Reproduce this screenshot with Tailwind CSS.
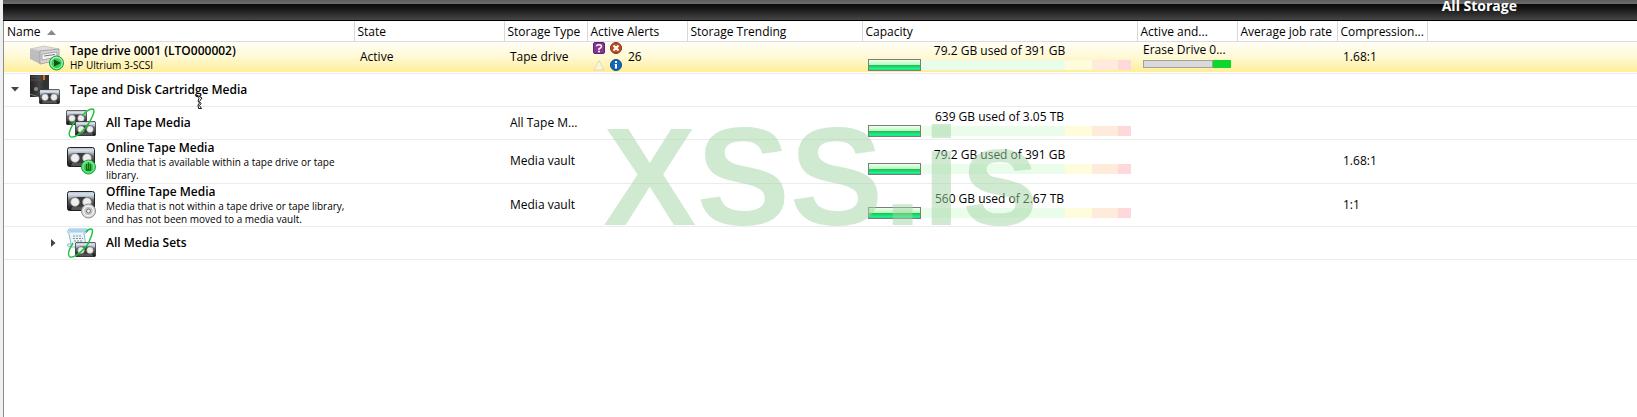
<!DOCTYPE html>
<html lang="en">
<head>
<meta charset="utf-8">
<title>All Storage</title>
<script src="https://cdn.jsdelivr.net/npm/@tailwindcss/browser@4"></script>
</head>
<body class="relative min-h-screen overflow-x-hidden border-l-[3px] border-[#f0f0f0] bg-white font-['Open_Sans','Noto_Sans',sans-serif] text-xs leading-4 text-black">
<svg class="absolute size-0" aria-hidden="true">
  <defs>
    <linearGradient id="shell" x1="0" y1="0" x2="0" y2="1"><stop offset="0" stop-color="#b9bec4"/><stop offset=".15" stop-color="#d5e1ee"/><stop offset=".3" stop-color="#aeb4ba"/><stop offset=".45" stop-color="#63666a"/><stop offset=".75" stop-color="#3a3a3c"/><stop offset="1" stop-color="#111"/></linearGradient>
    <linearGradient id="tower" x1="0" y1="0" x2="1" y2="0"><stop offset="0" stop-color="#222"/><stop offset=".5" stop-color="#444"/><stop offset="1" stop-color="#262626"/></linearGradient>
    <radialGradient id="green" cx=".5" cy=".6" r=".6"><stop offset="0" stop-color="#1fd62e"/><stop offset=".6" stop-color="#3bcf54"/><stop offset="1" stop-color="#9be8a8"/></radialGradient>
    <symbol id="cart" viewBox="0 0 28 20">
      <rect x=".5" y=".5" width="27" height="19" rx="2" fill="url(#shell)" stroke="#222"/>
      <path d="M2 16h24v2H2z" fill="#222"/><path d="M5 16h18l1 3H4z" fill="#555"/>
      <rect x="3" y="6" width="22" height="10" rx="5" fill="#3d3d3d"/>
      <circle cx="8" cy="11" r="4.300" fill="#eee" stroke="#aaa" stroke-width=".8"/><circle cx="20" cy="11" r="4.300" fill="#eee" stroke="#aaa" stroke-width=".8"/>
    </symbol>
  </defs>
</svg>

<header class="flex h-[21px] items-start justify-end overflow-hidden border-b border-black bg-[linear-gradient(#5c5c5c_0,#6e6e6e_4px,#0a0a0a_4px,#141414_8px,#464646_20px)] pr-[120px]">
  <h1 class="-mt-1 text-sm leading-5 font-bold text-white">All Storage</h1>
</header>

<main class="min-h-[calc(100vh-21px)] border-l border-[#8c8c8c]">
<table class="w-full table-fixed border-collapse text-left">
  <colgroup><col class="w-[350px]"><col class="w-[150px]"><col class="w-[83px]"><col class="w-[100px]"><col class="w-[175px]"><col class="w-[275px]"><col class="w-[100px]"><col class="w-[100px]"><col class="w-[90px]"><col></colgroup>
  <thead>
    <tr class="h-5 border-b border-[#dcdce0] whitespace-nowrap [&>th]:px-[3px] [&>th]:pt-[3px] [&>th]:pb-0 [&>th]:font-normal [&>th]:border-r [&>th]:border-[#d8d8dc]">
      <th><span class="flex items-center gap-1.5">Name <svg width="9" height="5" viewBox="0 0 9 5"><path d="M4.500 0 9 5H0z" fill="#8a8a8a"/></svg></span></th>
      <th>State</th><th>Storage Type</th><th>Active Alerts</th><th>Storage Trending</th><th>Capacity</th><th>Active and...</th><th>Average job rate</th><th>Compression...</th><td></td>
    </tr>
  </thead>
  <tbody class="[&>tr]:border-b [&>tr]:border-[#ececec] [&_td]:px-1.5 [&_td]:py-0">
    <tr class="h-8 bg-linear-to-b from-[#fffef8] via-[#fff9d6] to-[#ffee98]">
      <td><div class="flex items-center gap-1.5 pl-5">
        <svg class="shrink-0" width="34" height="30" viewBox="0 0 34 30">
          <path d="M0 7 14 4l15 3-9 3z" fill="#dedede" stroke="#b8b8b8" stroke-width=".6"/><path d="M0 7l10 2v13L0 17z" fill="#bdbdbd"/><path d="M10 9l19-2v11l-19 4z" fill="#d4d4d4" stroke="#999" stroke-width=".8"/><path d="M12 12l15-2v5l-15 3z" fill="#f5f5f5" stroke="#8b8b8b" stroke-width=".7"/><path d="M14 14l11-1.500" stroke="#777"/>
          <circle cx="26.500" cy="21" r="7" fill="url(#green)" stroke="#16a050"/><circle cx="26.500" cy="21" r="5.700" fill="none" stroke="#c8f5cf" stroke-width=".9"/><path d="M24 17.500l7 3.500-7 3.500z" fill="#174d1d"/>
        </svg>
        <div><div class="font-semibold">Tape drive 0001 (LTO000002)</div><div class="text-[10px] leading-[13px]">HP Ultrium 3-SCSI</div></div>
      </div></td>
      <td>Active</td><td class="whitespace-nowrap">Tape drive</td>
      <td><div class="flex items-center gap-1.5">
        <svg width="29" height="30" viewBox="0 0 29 30">
          <rect x=".5" y=".5" width="11" height="11" rx="1.500" fill="#873493" stroke="#5d2268"/><path d="M3.500 4.300Q3.500 2.800 6 2.800t2.500 1.700Q8.500 6 6 6.800V8" fill="none" stroke="#fff" stroke-width="1.500"/><path d="M5 8.800h2v1.400H5z" fill="#fff"/>
          <circle cx="23" cy="6" r="5.500" fill="#bd4d21" stroke="#823210"/><path d="M20.500 3.500l5 5m0-5-5 5" stroke="#fff" stroke-width="2"/>
          <path d="M6 18.500 11 28H1z" fill="#fdf6cf" stroke="#dedbc8"/>
          <circle cx="23" cy="23" r="5.500" fill="#1068bd" stroke="#0b4a8c"/><path d="M22 19h2v2h-2zM21.500 22H24v4.500h-2V23z" fill="#fff"/>
        </svg><span>26</span></div></td>
      <td></td>
      <td><div class="text-center">79.2 GB used of 391 GB</div>
        <div class="flex h-3 items-center"><div class="h-3 w-1/5 border border-[#7c7c7c] bg-[linear-gradient(#effff0,#b5f8b4_50%,#20b955_50%,#1bf08a_85%,#1dde7c)]"></div><div class="h-2.5 w-[55%] bg-[#eafdea]"></div><div class="h-2.5 w-1/10 bg-[#fffcdc]"></div><div class="h-2.5 w-1/10 bg-[#ffebdc]"></div><div class="h-2.5 w-1/20 bg-[#ffd8dc]"></div></div></td>
      <td><div class="-mt-1 whitespace-nowrap">Erase Drive 0...</div><div class="mt-0.5 flex h-2"><div class="grow border border-[#a0a0a0] bg-[#dadada]"></div><div class="w-[18px] bg-[#0bd82b]"></div></div></td>
      <td></td><td>1.68:1</td><td></td>
    </tr>
    <tr class="h-[33px]">
      <td><div class="flex items-center">
        <button type="button" aria-label="Collapse Tape and Disk Cartridge Media" class="w-5 pl-px"><svg width="8" height="5" viewBox="0 0 8 5"><path d="M0 0h8L4 4.500z" fill="#444"/></svg></button>
        <svg class="mr-2.5 shrink-0" width="30" height="30" viewBox="0 0 30 30"><rect width="19" height="22" fill="url(#tower)"/><path d="M13 0h6v22h-6z" fill="#333"/><path d="M1 2h11M1 5h11" stroke="#555"/><path d="M14 0v5" stroke="#e36b24" stroke-width="2"/><circle cx="6" cy="14" r="2" fill="#888"/><path d="M0 19l9 3" stroke="#777"/><use href="#cart" x="9" y="14" width="21" height="15"/></svg>
        <span class="font-semibold whitespace-nowrap">Tape and Disk Cartridge Media</span>
      </div></td><td></td><td></td><td></td><td></td><td></td><td></td><td></td><td></td><td></td>
    </tr>
    <tr class="h-[33px]">
      <td><div class="flex items-center gap-2.5 pl-14">
        <svg class="shrink-0" width="30" height="30" viewBox="0 0 30 30"><use href="#cart" y="2" width="21" height="15"/><use href="#cart" x="9" y="13" width="21" height="15"/><path d="M9 13Q0 27 5 29c6 1 14-8 18-14Q31 1 26 1q-4 0-10 7" fill="none" stroke="#18c43e" stroke-width="1.400"/></svg>
        <span class="font-semibold">All Tape Media</span></div></td>
      <td></td><td class="whitespace-nowrap">All Tape M...</td><td></td><td></td>
      <td><div class="text-center">639 GB used of 3.05 TB</div>
        <div class="flex h-3 items-center"><div class="h-3 w-1/5 border border-[#7c7c7c] bg-[linear-gradient(#effff0,#b5f8b4_50%,#20b955_50%,#1bf08a_85%,#1dde7c)]"></div><div class="h-2.5 w-[55%] bg-[#eafdea]"></div><div class="h-2.5 w-1/10 bg-[#fffcdc]"></div><div class="h-2.5 w-1/10 bg-[#ffebdc]"></div><div class="h-2.5 w-1/20 bg-[#ffd8dc]"></div></div></td>
      <td></td><td></td><td></td><td></td>
    </tr>
    <tr class="h-11">
      <td><div class="flex items-center gap-2.5 pl-14">
        <svg class="shrink-0" width="30" height="28" viewBox="0 0 30 28"><use href="#cart" x="1" width="28" height="20"/><circle cx="22.500" cy="20" r="7" fill="url(#green)" stroke="#18a443"/><circle cx="22.500" cy="20" r="5.500" fill="none" stroke="#8ce39b"/><path d="M20.500 17v6h4v-6M22.500 15.500v7" fill="none" stroke="#146522" stroke-width="1.300"/></svg>
        <div><div class="font-semibold">Online Tape Media</div><div class="text-[10px] leading-[13px]">Media that is available within a tape drive or tape<br>library.</div></div></div></td>
      <td></td><td class="whitespace-nowrap">Media vault</td><td></td><td></td>
      <td><div class="text-center">79.2 GB used of 391 GB</div>
        <div class="flex h-3 items-center"><div class="h-3 w-1/5 border border-[#7c7c7c] bg-[linear-gradient(#effff0,#b5f8b4_50%,#20b955_50%,#1bf08a_85%,#1dde7c)]"></div><div class="h-2.5 w-[55%] bg-[#eafdea]"></div><div class="h-2.5 w-1/10 bg-[#fffcdc]"></div><div class="h-2.5 w-1/10 bg-[#ffebdc]"></div><div class="h-2.5 w-1/20 bg-[#ffd8dc]"></div></div></td>
      <td></td><td></td><td>1.68:1</td><td></td>
    </tr>
    <tr class="h-[43px]">
      <td><div class="flex items-center gap-2.5 pl-14">
        <svg class="shrink-0" width="30" height="28" viewBox="0 0 30 28"><use href="#cart" x="1" width="28" height="20"/><circle cx="22.500" cy="20" r="7" fill="#d9d9d9" stroke="#8c8c8c"/><circle cx="22.500" cy="20" r="4.800" fill="#c4c4c4" stroke="#fff"/><circle cx="22.500" cy="20" r="2" fill="#eee" stroke="#777"/></svg>
        <div><div class="font-semibold">Offline Tape Media</div><div class="text-[10px] leading-[13px]">Media that is not within a tape drive or tape library,<br>and has not been moved to a media vault.</div></div></div></td>
      <td></td><td class="whitespace-nowrap">Media vault</td><td></td><td></td>
      <td><div class="text-center">560 GB used of 2.67 TB</div>
        <div class="flex h-3 items-center"><div class="h-3 w-1/5 border border-[#7c7c7c] bg-[linear-gradient(#effff0,#b5f8b4_50%,#20b955_50%,#1bf08a_85%,#1dde7c)]"></div><div class="h-2.5 w-[55%] bg-[#eafdea]"></div><div class="h-2.5 w-1/10 bg-[#fffcdc]"></div><div class="h-2.5 w-1/10 bg-[#ffebdc]"></div><div class="h-2.5 w-1/20 bg-[#ffd8dc]"></div></div></td>
      <td></td><td></td><td>1:1</td><td></td>
    </tr>
    <tr class="h-[33px]">
      <td><div class="flex items-center pl-10">
        <button type="button" aria-label="Expand All Media Sets" class="w-4 pl-px"><svg width="5" height="8" viewBox="0 0 5 8"><path d="M0 0v8l4.500-4z" fill="#444"/></svg></button>
        <svg class="mr-2.5 shrink-0" width="30" height="30" viewBox="0 0 30 30"><path d="M3 1h18q2 2-1 4h-2l2 14H4Q0 18 2 16h3L3 6Q0 4 3 1z" fill="#e9f4fb" stroke="#7fb4d2" stroke-width=".9"/><path d="M3 2h17v2.500H3z" fill="#a9d3ec"/><path d="M7 8h9M7 10.500h10M8 13h8" stroke="#888" stroke-dasharray="2 1"/><use href="#cart" x="9" y="14" width="21" height="15"/><path d="M7 15Q0 26 4 29c6 1 14-8 18-13Q29 1 25 1q-3 0-5 3" fill="none" stroke="#18c43e" stroke-width="1.400"/></svg>
        <span class="font-semibold">All Media Sets</span></div></td><td></td><td></td><td></td><td></td><td></td><td></td><td></td><td></td><td></td>
    </tr>
  </tbody>
</table>
</main>

<div class="pointer-events-none absolute top-[108px] left-[600px] font-['Liberation_Sans',sans-serif] text-[140px] leading-[138px] font-bold text-[#a2d6a4]/50">XSS.is</div>
<svg class="pointer-events-none absolute top-[94px] left-[192px]" width="9" height="16" viewBox="0 0 9 16" aria-hidden="true"><path d="M1.500 1 7 4 4.500 7.500l1.500 2-1.500 2 2 3H3.500L3 11l1.500-2L3 7l1-2.500z" fill="#fff" stroke="#111"/></svg>
</body>
</html>
